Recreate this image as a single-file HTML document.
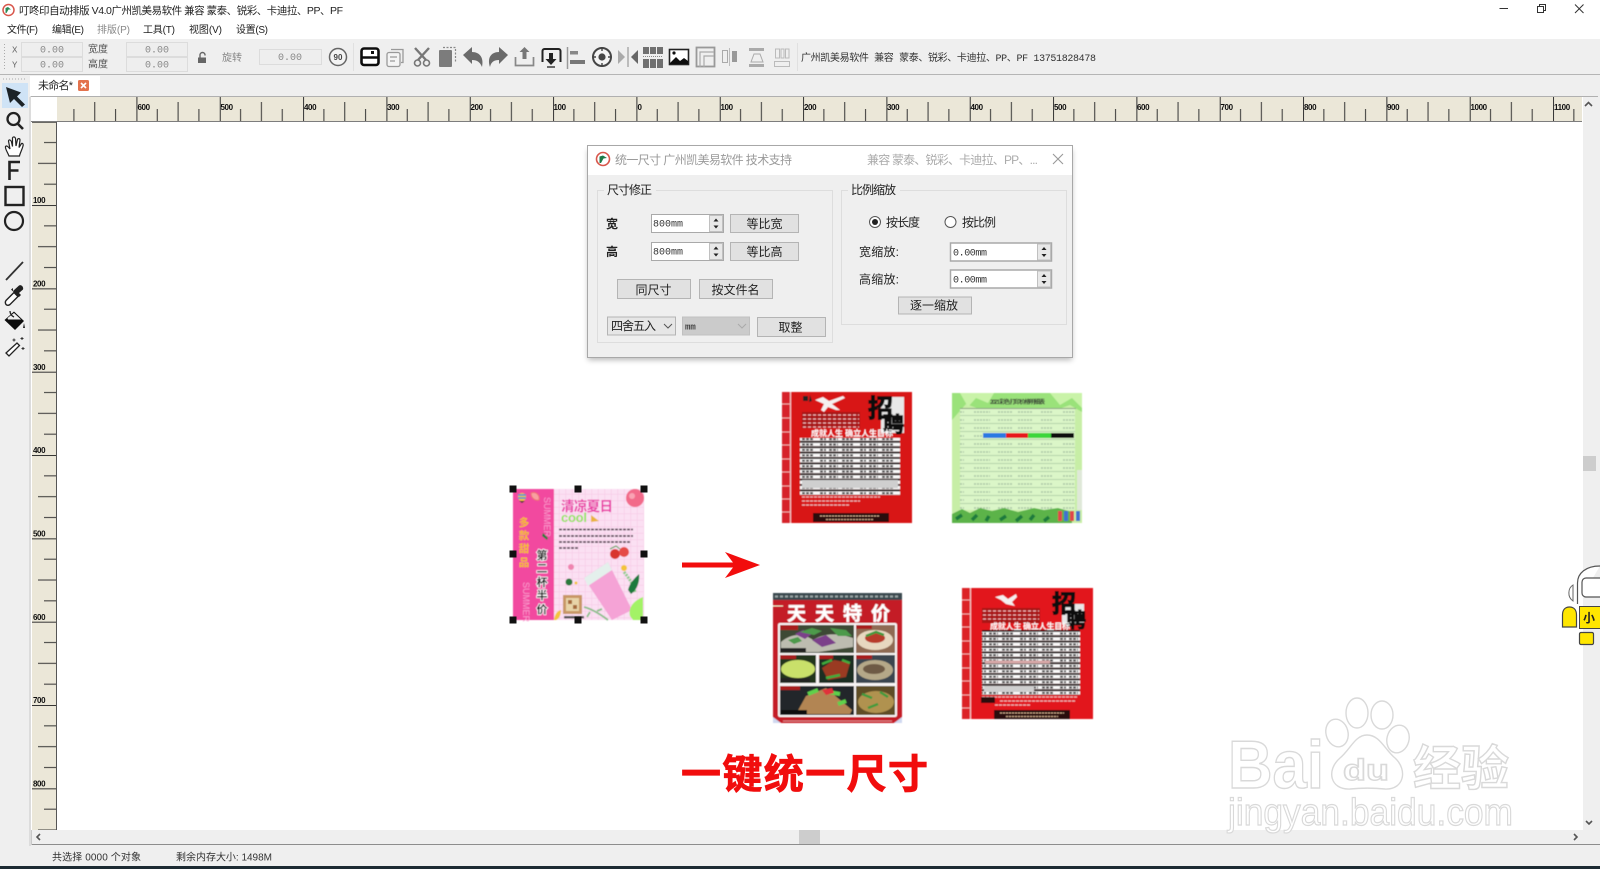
<!DOCTYPE html>
<html lang="zh">
<head>
<meta charset="utf-8">
<title>叮咚印自动排版</title>
<style>
html,body{margin:0;padding:0;background:#fff;width:1600px;height:869px;overflow:hidden}
svg{display:block;position:absolute;left:0;top:0}
text{font-family:"Liberation Sans","Noto Sans CJK SC",sans-serif;fill:#222;font-size:10px}
.m{font-family:"Liberation Mono","Noto Sans CJK SC",monospace}
.d{font-size:12px;fill:#222}
.g{fill:#888}
.rl{font-size:8px;font-weight:bold;fill:#111;letter-spacing:-.4px}
.btn{fill:#e1e1e1;stroke:#b4b4b4;stroke-width:1}
.wm{fill:#fff;stroke:#d9d9d9;stroke-width:1.400}
.v1{font-size:10.500px;font-weight:bold;fill:#f6c028}
.v2{font-size:11px;font-weight:bold;fill:#111;stroke:#fff;stroke-width:1.500;paint-order:stroke}
.zp{font-weight:bold;fill:#0c0c0c;stroke:#0c0c0c;stroke-width:1}
</style>
</head>
<body>
<svg width="1600" height="869" viewBox="0 0 1600 869" xmlns="http://www.w3.org/2000/svg">
<defs>
<filter id="ui" x="0" y="0" width="100%" height="100%"><feGaussianBlur stdDeviation="0.3"/></filter>
<filter id="pb" x="-5%" y="-5%" width="110%" height="110%"><feGaussianBlur stdDeviation="0.55"/></filter>
<filter id="sh" x="-5%" y="-5%" width="110%" height="115%"><feGaussianBlur stdDeviation="3"/></filter>
<pattern id="rt" x="636.4" y="97" width="83.33" height="24" patternUnits="userSpaceOnUse">
<path d="M.5 0V24M20.83 12V24M41.67 5V24M62.5 12V24" stroke="#333" stroke-width="1" fill="none"/>
</pattern>
<pattern id="rl" x="32" y="121.7" width="24" height="83.33" patternUnits="userSpaceOnUse">
<path d="M0 .5H24M12 20.83H24M6 41.67H24M12 62.5H24" stroke="#333" stroke-width="1" fill="none"/>
</pattern>
<pattern id="pg" x="0" y="0" width="6.5" height="6.5" patternUnits="userSpaceOnUse">
<path d="M0 0H6.5M0 0V6.5" stroke="#f6c5e4" stroke-width="1" fill="none"/>
</pattern>
<pattern id="tbl" x="0" y="0" width="40" height="5.4" patternUnits="userSpaceOnUse">
<rect width="40" height="3.4" fill="#fafafa"/>
<rect y="3.4" width="40" height="2" fill="#1f0f0f"/>
<path d="M2 1.700H14M20 1.700H26M29 1.700H38" stroke="#222" stroke-width="1.800" stroke-dasharray="3 1"/>
</pattern>
<pattern id="grn" x="0" y="0" width="115" height="8" patternUnits="userSpaceOnUse">
<rect width="115" height="8" fill="#dbf6c8"/>
<path d="M0 7.500H115" stroke="#a5c7a0" stroke-width=".7"/>
<path d="M6 4H18M28 4H44M54 4H70M78 4H92M98 4H112" stroke="#a8c2a4" stroke-width="1.400" stroke-dasharray="2 1"/>
</pattern>
</defs>

<g filter="url(#ui)">
<!-- title + menu -->
<rect width="1600" height="39" fill="#fff"/>
<circle cx="8.500" cy="10" r="5.500" fill="#fff" stroke="#d8564c" stroke-width="1.500"/>
<path d="M5.500 13V8L8 7 11 9.500 8.500 9.500 6.500 13Z" fill="#2a8a55"/>
<text x="19" y="14" textLength="324" style="font-size:10.500px">叮咚印自动排版 V4.0广州凯美易软件 兼容 蒙泰、锐彩、卡迪拉、PP、PF</text>
<text x="7" y="33" textLength="31">文件(F)</text>
<text x="52" y="33" textLength="32">编辑(E)</text>
<text x="97" y="33" textLength="33" class="g">排版(P)</text>
<text x="143" y="33" textLength="32">工具(T)</text>
<text x="189" y="33" textLength="33">视图(V)</text>
<text x="236" y="33" textLength="32">设置(S)</text>
<path d="M1499.500 8.500H1508" stroke="#333" fill="none"/>
<path d="M1537.500 6.500h6v6h-6zM1539.500 6.500v-2h6v6h-2" stroke="#333" fill="none"/>
<path d="M1575 4.500l8.500 8.500M1583.500 4.500L1575 13" stroke="#333" fill="none"/>

<!-- window background -->
<rect y="39" width="1600" height="830" fill="#efefef"/>
<rect y="74" width="1600" height="1" fill="#b5b5b5"/>
<rect x="0" y="866" width="1600" height="3" fill="#1b2a33"/>

<!-- toolbar -->
<path d="M4.500 44V70" stroke="#aaa" stroke-dasharray="1 2" fill="none"/>
<text x="12" y="52.500" class="m" style="font-size:9px;fill:#666">X</text>
<text x="12" y="67.500" class="m" style="font-size:9px;fill:#666">Y</text>
<g fill="#eeeeee" stroke="#dcdcdc">
<rect x="21.500" y="42.500" width="61" height="14"/>
<rect x="21.500" y="57.500" width="61" height="14"/>
<rect x="126.500" y="42.500" width="61" height="14"/>
<rect x="126.500" y="57.500" width="61" height="14"/>
<rect x="259.500" y="49.500" width="62" height="15"/>
</g>
<text x="52" y="52.500" class="m g" text-anchor="middle">0.00</text>
<text x="52" y="67.500" class="m g" text-anchor="middle">0.00</text>
<text x="157" y="52.500" class="m g" text-anchor="middle">0.00</text>
<text x="157" y="67.500" class="m g" text-anchor="middle">0.00</text>
<text x="290" y="60" class="m g" text-anchor="middle">0.00</text>
<text x="88" y="52.500" style="fill:#555">宽度</text>
<text x="88" y="67.500" style="fill:#555">高度</text>
<text x="222" y="61" class="g">旋转</text>
<path d="M198 57.500h8v5.500h-8z" fill="#666"/>
<path d="M200 57.500v-2.500a2.500 2.500 0 0 1 5 0v.5" stroke="#666" stroke-width="1.400" fill="none"/>
<circle cx="338" cy="57" r="8.500" fill="#f4f4f4" stroke="#666" stroke-width="1.500"/>
<text x="338" y="60" text-anchor="middle" style="font-size:8px;font-weight:bold;fill:#444">90</text>
<path d="M353.500 43V71M797.500 43V71" stroke="#e0e0e0" fill="none"/>

<!-- save -->
<rect x="361.500" y="48.500" width="17" height="16.500" rx="2.500" fill="#fff" stroke="#111" stroke-width="2.600"/>
<path d="M361 57.500H379" stroke="#111" stroke-width="2.400"/>
<rect x="371" y="51" width="3" height="3" fill="#111"/>
<!-- copy -->
<path d="M391 49.500h12v13h-2" fill="none" stroke="#999" stroke-width="1.300"/>
<rect x="387" y="52.500" width="13" height="14" rx="2" fill="#f4f4f4" stroke="#999" stroke-width="1.300"/>
<path d="M390 57h7M390 61h5" stroke="#999" stroke-width="1.200"/>
<!-- scissors -->
<path d="M415 48L426 60M429 48L418 60" stroke="#777" stroke-width="2.400" fill="none"/>
<circle cx="417.500" cy="63" r="3" fill="none" stroke="#777" stroke-width="1.600"/>
<circle cx="426.500" cy="63" r="3" fill="none" stroke="#777" stroke-width="1.600"/>
<!-- paste -->
<rect x="439" y="50" width="13" height="17" rx="1" fill="#7c7c7c"/>
<path d="M443 47.500h12.500v15" fill="none" stroke="#888" stroke-width="1.200" stroke-dasharray="2 1.500"/>
<!-- undo redo -->
<path d="M463 55L472 47V52C480 52 484 58 482 67C480 62 477 60 472 60V64Z" fill="#6a6a6a"/>
<path d="M508 55L499 47V52C491 52 487 58 490 67C491 62 494 60 499 60V64Z" fill="#6a6a6a"/>
<!-- upload -->
<path d="M515.500 57v8.500h18V57" fill="none" stroke="#888" stroke-width="1.700"/>
<path d="M524.500 47l5 5h-3v7h-4v-7h-3z" fill="#777"/>
<!-- download -->
<path d="M542.500 62V51a2 2 0 0 1 2-2h14a2 2 0 0 1 2 2v11" fill="none" stroke="#222" stroke-width="2"/>
<path d="M549 53h4v6h3.500l-5.500 6-5.500-6H549z" fill="#222"/>
<path d="M547 67h8" stroke="#222" stroke-width="1.300"/>
<!-- align -->
<path d="M567.500 47V69" stroke="#999" stroke-width="1.500"/>
<rect x="570" y="51" width="8" height="3.500" fill="#888"/>
<rect x="570" y="60" width="15" height="4" fill="#777"/>
<!-- target -->
<circle cx="602" cy="57" r="9" fill="#f4f4f4" stroke="#444" stroke-width="2"/>
<circle cx="602" cy="57" r="3.600" fill="#444"/>
<path d="M602 47v4M602 63v4M592 57h4M608 57h4" stroke="#444" stroke-width="1.400"/>
<!-- mirror -->
<path d="M618 50v14l7-7z" fill="#aaa"/>
<path d="M628 47V67" stroke="#888"/>
<path d="M638 50v14l-7-7z" fill="#666"/>
<!-- grid -->
<g fill="#707070">
<rect x="643" y="47" width="6" height="7"/><rect x="650" y="47" width="6" height="7"/><rect x="657" y="47" width="6" height="7"/>
<rect x="643" y="59" width="6" height="9"/><rect x="650" y="59" width="6" height="9"/><rect x="657" y="59" width="6" height="9"/>
</g>
<path d="M643 56.500H663" stroke="#888" stroke-dasharray="1 1"/>
<!-- image -->
<rect x="669.500" y="49.500" width="19" height="15" fill="#fff" stroke="#222" stroke-width="1.600"/>
<path d="M670 63l6-6 4 4 4-3 4 3v3h-18z" fill="#111"/>
<circle cx="674" cy="53" r="1.600" fill="#111"/>
<!-- layout -->
<rect x="696.500" y="47.500" width="18" height="19" fill="none" stroke="#999" stroke-width="1.800"/>
<path d="M700 67V52h14M704 67V56h10" fill="none" stroke="#aaa" stroke-width="1.200"/>
<!-- gray mirror -->
<rect x="722.500" y="50.500" width="5" height="12" fill="none" stroke="#aaa"/>
<path d="M729.500 48v18" stroke="#bbb"/>
<path d="M732 51h5v11h-5z" fill="#999"/>
<!-- vertical -->
<path d="M749 48h15v3h-15zM749 64h15v3h-15z" fill="#aaa"/>
<path d="M751 62l3-8h6l3 8z" fill="none" stroke="#aaa"/>
<!-- distribute -->
<rect x="774.500" y="61.500" width="15" height="5" fill="none" stroke="#bbb"/>
<path d="M775.500 49h4v9h-4zM781 49h3v9h-3zM785.500 49h3.500v9h-3.500z" fill="none" stroke="#bbb"/>
<text x="801" y="61" class="m" textLength="295" style="fill:#333">广州凯美易软件 兼容 蒙泰、锐彩、卡迪拉、PP、PF  13751828478</text>

<!-- tab row -->
<rect x="30" y="76" width="70" height="21" fill="#fff"/>
<text x="38" y="89" textLength="35" style="font-size:11px">未命名*</text>
<rect x="78" y="80" width="11" height="11" rx="1.500" fill="#e3734e"/>
<path d="M81 83l5 5M86 83l-5 5" stroke="#fff" stroke-width="1.600"/>

<!-- left toolbar -->
<rect x="29" y="97" width="2" height="749" fill="#dcdcdc"/>
<path d="M3 79H26" stroke="#aaa" stroke-dasharray="1 2"/>
<rect x="2" y="83" width="26" height="25" fill="#cfe3f6"/>
<path d="M6 87L21 92.500 17 96.500 25 104.500 22 107 14 99 10 103Z" fill="#1e2226"/>
<circle cx="13.500" cy="119" r="6" fill="none" stroke="#222" stroke-width="2.300"/>
<path d="M18 124l5 5" stroke="#222" stroke-width="2.600"/>
<path d="M9 156C7 151 5 149 5.500 146.500C6.500 145 8.500 147 10 149L8.500 141C9 139 11 140 11.500 142L12.500 146.500L12.500 138C13 136.500 15 136.500 15.500 138.500L16 146L17.500 139.500C18 138 20 138.500 20 140L19 147.500L21.500 143.500C23 143 23.500 144.500 23 146C22 150 20 153 19.500 156Z" fill="#fff" stroke="#222" stroke-width="1.200"/>
<path d="M9.500 180V162H20M9.500 170.500H18.500" fill="none" stroke="#222" stroke-width="2.600"/>
<rect x="5.500" y="187" width="18" height="18" fill="none" stroke="#222" stroke-width="2.400"/>
<circle cx="14" cy="221" r="9" fill="none" stroke="#222" stroke-width="2.200"/>
<path d="M6 280L23 262" stroke="#333" stroke-width="1.800"/>
<path d="M6 304.500C5 303 5 302 6 300.500L14 292.500L18 296.500L10 304.500C8.500 305.500 7 305.500 6 304.500Z" fill="#fff" stroke="#222" stroke-width="1.400"/>
<path d="M13 291L19 285.500C21 284 24 287 23 289.500L19 293L21 295L19 297L11 289.500L13 288Z" fill="#222"/>
<path d="M4.500 320L14 311.500L24 321L15 330Z" fill="#111"/>
<path d="M7.500 318L14 313L21 319.500H8Z" fill="#efefef"/>
<path d="M10 311C10 314 12 316 14 317" stroke="#222" stroke-width="1.300" fill="none"/>
<path d="M24 323l-1 5 2 0z" fill="#222"/>
<path d="M6 353L17 343L19.500 345.500L9 356Z" fill="#fff" stroke="#222" stroke-width="1.300"/>
<path d="M14 338.500v3M12.500 340h3M22 337v3M20.500 338.500h3M23 347v3M21.500 348.500h3" stroke="#333"/>

<!-- frame -->
<rect x="31" y="96" width="1552" height="735" fill="#fff"/>
<path d="M30.500 96.500H1598" stroke="#b0b0b0" fill="none"/>
<rect x="57" y="97" width="1525" height="24" fill="#ebe7d8"/>
<rect x="57" y="97" width="1525" height="24" fill="url(#rt)"/>
<rect x="31" y="121" width="1551" height="1" fill="#7d7d7d"/>
<rect x="32" y="122" width="24" height="708" fill="#ebe7d8"/>
<rect x="32" y="122" width="24" height="708" fill="url(#rl)"/>
<rect x="56" y="122" width="1" height="708" fill="#555"/>
<!-- top ruler labels -->
<text x="137.500" y="110" class="rl">600</text><text x="220.500" y="110" class="rl">500</text><text x="304" y="110" class="rl">400</text><text x="387" y="110" class="rl">300</text><text x="470.500" y="110" class="rl">200</text><text x="553.500" y="110" class="rl">100</text><text x="637.500" y="110" class="rl">0</text><text x="720.500" y="110" class="rl">100</text><text x="804" y="110" class="rl">200</text><text x="887" y="110" class="rl">300</text><text x="970.500" y="110" class="rl">400</text><text x="1054" y="110" class="rl">500</text><text x="1137" y="110" class="rl">600</text><text x="1220.500" y="110" class="rl">700</text><text x="1304" y="110" class="rl">800</text><text x="1387" y="110" class="rl">900</text><text x="1470.500" y="110" class="rl">1000</text><text x="1554" y="110" class="rl">1100</text>
<!-- left ruler labels -->
<text x="33" y="203" class="rl">100</text><text x="33" y="286.500" class="rl">200</text><text x="33" y="370" class="rl">300</text><text x="33" y="453" class="rl">400</text><text x="33" y="536.500" class="rl">500</text><text x="33" y="620" class="rl">600</text><text x="33" y="703" class="rl">700</text><text x="33" y="786.500" class="rl">800</text>

<!-- scrollbars -->
<rect x="31" y="830" width="1569" height="14" fill="#efefef"/>
<rect x="1583" y="97" width="15" height="747" fill="#efefef"/>
<rect x="799" y="830" width="21" height="14" fill="#cdcdcd"/>
<rect x="1583" y="456" width="13" height="15" fill="#cdcdcd"/>
<path d="M31 844.500H1600" stroke="#8d8d8d" fill="none"/>
<path d="M31.500 830V845" stroke="#c8c8c8" fill="none"/>
<path d="M1585 106l3.500-3.500 3.500 3.500M1586 821l3 3 3-3M1574 834l3 3-3 3M40 834l-3 3 3 3" stroke="#555" stroke-width="1.600" fill="none"/>

<!-- status -->
<text x="52" y="860.500" textLength="89" style="fill:#333">共选择 0000 个对象</text>
<text x="176" y="860.500" textLength="96" style="fill:#333">剩余内存大小: 1498M</text>

<!-- side mascot -->
<path d="M1577.500 604V583C1577.500 573 1586 566 1600 566" fill="#fff" stroke="#555" stroke-width="1.200"/>
<rect x="1582" y="578" width="24" height="19" rx="4" fill="#fff" stroke="#555" stroke-width="1.200"/>
<path d="M1573 585C1568 588 1567 597 1573 601Z" fill="#fff" stroke="#666"/>
<path d="M1562.500 627V615C1562.500 610 1565 607 1569.500 607C1574 607 1576.500 610 1576.500 615V627Z" fill="#ffe600" stroke="#444" stroke-width="1.200"/>
<rect x="1579.500" y="606.500" width="24" height="22" fill="#ffe600" stroke="#444" stroke-width="1"/>
<text x="1583" y="622" style="font-size:12px;fill:#222;font-weight:bold">小</text>
<rect x="1579.500" y="632.500" width="14" height="12" rx="1.500" fill="#ffe600" stroke="#444" stroke-width="1.200"/>

<!-- dialog -->
<rect x="588" y="150" width="484" height="210" fill="#000" opacity=".28" filter="url(#sh)"/>
<rect x="587.500" y="145.500" width="485" height="212" fill="#efefef" stroke="#a8a8a8"/>
<rect x="588" y="146" width="484" height="29" fill="#fff"/>
<circle cx="603" cy="159" r="6.500" fill="#fff" stroke="#d8564c" stroke-width="1.600"/>
<path d="M599.500 163V156.500L603 155.500 607 158 603.500 158.500 601 163Z" fill="#1f7a4a"/>
<text x="615" y="164" textLength="177" style="font-size:12px;fill:#9a9a9a">统一尺寸 广州凯美易软件 技术支持</text>
<text x="867" y="164" textLength="171" style="font-size:12px;fill:#ababab">兼容 蒙泰、锐彩、卡迪拉、PP、...</text>
<path d="M1053 154l10 10M1063 154l-10 10" stroke="#999" stroke-width="1.100" fill="none"/>

<rect x="597.500" y="190.500" width="235" height="152" fill="none" stroke="#dddddd"/>
<rect x="841.500" y="190.500" width="225" height="134" fill="none" stroke="#dddddd"/>
<rect x="604" y="184" width="52" height="12" fill="#efefef"/>
<rect x="848" y="184" width="52" height="12" fill="#efefef"/>
<text x="607" y="194" class="d" textLength="45">尺寸修正</text>
<text x="851" y="194" class="d" textLength="45">比例缩放</text>

<text x="606" y="228" class="d" style="font-weight:bold">宽</text>
<text x="606" y="256" class="d" style="font-weight:bold">高</text>

<!-- spin boxes -->
<g fill="#fff" stroke="#a9a9a9">
<rect x="651.500" y="214.500" width="72" height="18"/>
<rect x="651.500" y="242.500" width="72" height="18"/>
<rect x="950.500" y="243" width="101" height="18" stroke-width="1.500"/>
<rect x="950.500" y="270" width="101" height="18" stroke-width="1.500"/>
</g>
<g fill="#e8e8e8" stroke="#c0c0c0">
<rect x="709.500" y="215.500" width="13" height="16"/>
<rect x="709.500" y="243.500" width="13" height="16"/>
<rect x="1037.500" y="244" width="13" height="16"/>
<rect x="1037.500" y="271" width="13" height="16"/>
</g>
<path d="M716 218.500l2.500 3h-5zM716 228.500l2.500-3h-5zM716 246.500l2.500 3h-5zM716 256.500l2.500-3h-5zM1044 247l2.500 3h-5zM1044 257l2.500-3h-5zM1044 274l2.500 3h-5zM1044 284l2.500-3h-5z" fill="#222"/>
<text x="653" y="226.500" class="m" textLength="30" style="font-size:10px;fill:#333">800mm</text>
<text x="653" y="254.500" class="m" textLength="30" style="font-size:10px;fill:#333">800mm</text>
<text x="953" y="255.500" class="m" textLength="34" style="font-size:10px;fill:#333">0.00mm</text>
<text x="953" y="282.500" class="m" textLength="34" style="font-size:10px;fill:#333">0.00mm</text>

<!-- buttons -->
<rect class="btn" x="730.500" y="214.500" width="68" height="18"/>
<rect class="btn" x="730.500" y="242.500" width="68" height="18"/>
<rect class="btn" x="617.500" y="279.500" width="73" height="19"/>
<rect class="btn" x="699.500" y="279.500" width="73" height="19"/>
<rect class="btn" x="757.500" y="317.500" width="68" height="19"/>
<rect class="btn" x="898.500" y="297" width="73" height="17"/>
<text x="764.500" y="228" class="d" text-anchor="middle">等比宽</text>
<text x="764.500" y="256" class="d" text-anchor="middle">等比高</text>
<text x="653.500" y="294" class="d" text-anchor="middle">同尺寸</text>
<text x="735.500" y="294" class="d" text-anchor="middle">按文件名</text>
<text x="790.500" y="331.500" class="d" text-anchor="middle">取整</text>
<text x="934" y="309.500" class="d" text-anchor="middle">逐一缩放</text>

<!-- selects -->
<rect x="607.500" y="317" width="68" height="18" fill="#e6e6e6" stroke="#b4b4b4"/>
<text x="611" y="330" class="d" textLength="45">四舍五入</text>
<path d="M664 324l4 4 4-4" stroke="#555" fill="none"/>
<rect x="682.500" y="317" width="67" height="18" fill="#cbcbcb" stroke="#c0c0c0"/>
<text x="685" y="329.500" class="m" style="font-size:9px;font-weight:bold;fill:#444">mm</text>
<path d="M738 324l4 4 4-4" stroke="#aaa" fill="none"/>

<!-- radios -->
<circle cx="875" cy="222" r="5.500" fill="#fff" stroke="#555"/>
<circle cx="875" cy="222" r="3" fill="#222"/>
<circle cx="950.500" cy="222" r="5.500" fill="#fff" stroke="#555"/>
<text x="886" y="226.500" class="d" textLength="34">按长度</text>
<text x="962" y="226.500" class="d" textLength="34">按比例</text>
<text x="859" y="256" class="d" textLength="40">宽缩放:</text>
<text x="859" y="283.500" class="d" textLength="40">高缩放:</text>
</g>

<!-- pink poster -->
<g filter="url(#pb)">
<rect x="513" y="489" width="131" height="131" fill="#fbe0f3"/>
<rect x="554" y="489" width="90" height="131" fill="url(#pg)"/>
<rect x="513" y="489" width="41" height="131" fill="#f2489f"/>
<circle cx="522" cy="497" r="4" fill="#f2c43a"/><path d="M518 495h8M518 498h8" stroke="#2d8fe0" stroke-width="1.500"/><path d="M519 501h6l-3 2z" fill="#333"/>
<path d="M531 493c6-2 9 3 8 7c-3 1-8-1-8-7z" fill="#f8a0a0" stroke="#f07070"/>
<text x="524" y="526" text-anchor="middle" class="v1">多</text>
<text x="524" y="539" text-anchor="middle" class="v1">款</text>
<text x="524" y="552" text-anchor="middle" class="v1">甜</text>
<text x="524" y="566" text-anchor="middle" class="v1">品</text>
<text x="542" y="559" text-anchor="middle" class="v2">第</text>
<text x="542" y="572" text-anchor="middle" class="v2">二</text>
<text x="542" y="586" text-anchor="middle" class="v2">杯</text>
<text x="542" y="599" text-anchor="middle" class="v2">半</text>
<text x="542" y="613" text-anchor="middle" class="v2">价</text>
<text transform="translate(544 497) rotate(90)" style="font-size:9px;fill:#f99ed0">SUMMER</text>
<text transform="translate(518 582) rotate(90)" style="font-size:0px;fill:#f99ed0"></text>
<text transform="translate(523 582) rotate(90)" style="font-size:9px;fill:#f99ed0">SUMMER</text>
<path d="M543 533l5 5-1 2-5-4z" fill="#2c7a3c"/>
<text x="561" y="511" textLength="52" style="font-size:13.500px;font-weight:bold;fill:#e93ea6">清凉夏日</text>
<text x="561" y="522" textLength="26" style="font-size:13px;font-weight:bold;fill:#93e45e">cool</text>
<path d="M591 515l8 6-8 1z" fill="#eab33c"/>
<circle cx="635" cy="498" r="9" fill="#f26b8a"/><circle cx="632" cy="496" r="3" fill="#f9a3b4"/>
<path d="M559 529.500H633M559 536H633M559 542H631M559 548H578" stroke="#3c2b3a" stroke-width="1.800" stroke-dasharray="3 1" opacity=".85"/>
<circle cx="615" cy="554" r="5" fill="#d8342f"/><circle cx="624" cy="552" r="5" fill="#e54c46"/>
<path d="M610 549l6-3 4 3" stroke="#4aa04a" fill="none"/>
<path d="M584 578L608 562L632 610L612 620Z" fill="#f5a3d6"/>
<path d="M584 578L608 562L612 570L588 586Z" fill="#e4f0ec"/>
<path d="M624 572c5 6 9 12 11 20" stroke="#8ccc8c" stroke-width="3" fill="none" stroke-dasharray="2 1"/>
<path d="M628 590c2-8 7-12 11-16c1 8-2 16-8 20z" fill="#1c7a3c"/>
<path d="M630 616c-2-8 3-15 13-19v23h-10z" fill="#a3f266"/>
<path d="M584 607c8 2 16 7 24 13M590 612l-3 5M597 611l5-2" stroke="#8bc08b" stroke-width="1.800" fill="none"/>
<rect x="563" y="595" width="19" height="19" fill="#c89766"/><rect x="566" y="598" width="13" height="13" fill="#e8d4a8"/><path d="M568 600h4v4h-4zM573 605h4v4h-4z" fill="#a56a3a"/>
<rect x="564" y="616" width="20" height="2.500" fill="#555"/>
<circle cx="571" cy="567" r="3" fill="#ef85b0"/><circle cx="569" cy="582" r="3.500" fill="#2c7a3c"/><circle cx="576" cy="583" r="1.500" fill="#f3c43a"/><circle cx="624" cy="568" r="3" fill="#f3c43a"/>
<path d="M554 620c1-6 3-9 7-10c0 5-2 9-5 10z" fill="#f3c43a"/>
</g>
<g fill="#111">
<rect x="509.500" y="485.500" width="7" height="7"/><rect x="574.500" y="485.500" width="7" height="7"/><rect x="640.500" y="485.500" width="7" height="7"/>
<rect x="509.500" y="550.500" width="7" height="7"/><rect x="640.500" y="550.500" width="7" height="7"/>
<rect x="509.500" y="616.500" width="7" height="7"/><rect x="574.500" y="616.500" width="7" height="7"/><rect x="640.500" y="616.500" width="7" height="7"/>
</g>

<!-- arrow -->
<g filter="url(#ui)">
<path d="M682 562.500H733L725 552L760 565L725 578L733 567.500H682Z" fill="#f20a0a"/>
</g>

<!-- red poster 1 -->
<g filter="url(#pb)">
<rect x="782" y="392" width="130" height="131" fill="#d81519"/>
<rect x="782" y="392" width="8" height="131" fill="#d6232a"/>
<path d="M790.500 392V523" stroke="#f5c8c8" stroke-width="1.200"/>
<path d="M782 404H790M782 418H790M782 432H790M782 445H790M782 459H790M782 472H790M782 486H790M782 499H790M782 512H790" stroke="#f0a8a8"/>
<path d="M815 400L823 397L829 401L843 396L845 398L832 404L840 410L836 410L828 407L824 412L821 410L824 404Z" fill="#f5f0f0"/>
<path d="M803 396h5v5h-5zM810 395l2 6-3 1z" fill="#222"/>
<rect x="802" y="412" width="58" height="16" fill="#a81218"/>
<path d="M803 415H859M803 419H859M803 423H859M803 427H859" stroke="#f2b8b8" stroke-dasharray="3 2" stroke-width="1.300"/>
<rect x="881" y="397" width="23" height="36" fill="#e8e8e8"/>
<text x="868" y="417" class="zp" style="font-size:25px">招</text>
<text x="883" y="432" class="zp" style="font-size:21px">聘</text>
<text x="811" y="436" textLength="82" style="font-size:8px;font-weight:bold;fill:#fff">成就人生 确立人生目标</text>
<rect x="800" y="438" width="100" height="57" fill="url(#tbl)"/>
<rect x="802" y="480" width="96" height="8" fill="#cfcfcf"/>
<path d="M802 497H880M802 501H860M802 505H850" stroke="#e9b8b8" stroke-width="1.300" stroke-dasharray="3 1"/>
<rect x="813" y="513" width="76" height="9" fill="#2b0b0b"/>
<path d="M820 516H880M826 519.500H874" stroke="#d8b090" stroke-dasharray="2 1"/>
</g>

<!-- green poster -->
<g filter="url(#pb)">
<rect x="952" y="393" width="130" height="130" fill="#c7eea6"/>
<path d="M952 393H1082V412L1070 405L1056 410H982L966 404L952 420Z" fill="#9ae27a"/>
<path d="M960 393l8 14 8-9 12 5 6-10zM1050 393l10 12 12-7 10 10v-15z" fill="#c9f3a8"/>
<text x="990" y="404" textLength="55" style="font-size:6px;font-weight:bold;fill:#333">2021 彩色 打印价格明细表</text>
<path d="M960 408.500H1076" stroke="#8ba284"/>
<rect x="960" y="409" width="115" height="101" fill="url(#grn)"/>
<rect x="983" y="433" width="23" height="5" fill="#2a79e2"/>
<rect x="1006" y="433" width="22" height="5" fill="#e8161c"/>
<rect x="1028" y="433" width="23" height="5" fill="#3bd63b"/>
<rect x="1051" y="433" width="23" height="5" fill="#0b0b0b"/>
<path d="M952 514l10-5 8 4 10-5 12 3 12-3 14 4 16-4 10 2 14-2 14 4v11H952z" fill="#5cb34a"/>
<path d="M956 519l6-4M972 520l5-5M986 521l3-5M1000 520l6-4M1016 521l6-5M1030 520l4-5M1044 521l5-4" stroke="#1f7a3c" stroke-width="3.500"/>
<rect x="1058" y="511" width="4" height="10" fill="#e0444c"/><rect x="1064" y="511" width="4" height="10" fill="#3f6fd0"/><rect x="1070" y="511" width="4" height="10" fill="#e0444c"/><rect x="1076" y="511" width="4" height="10" fill="#3f6fd0"/>
<rect x="1077" y="470" width="5" height="40" fill="#dfe8d8"/>
</g>

<!-- food poster -->
<g filter="url(#pb)">
<rect x="773" y="593" width="129" height="130" fill="#c41c26"/>
<rect x="773" y="593" width="129" height="7" fill="#3a4a50"/>
<path d="M775 596.500H900" stroke="#9aa5a5" stroke-width="2" stroke-dasharray="3 2"/>
<text x="787" y="620" textLength="103" style="font-size:19px;font-weight:bold;fill:#fff;stroke:#fff;stroke-width:.5">天天特价</text>
<path d="M773 606h10" stroke="#eec" stroke-width="1"/>
<rect x="778" y="623" width="119" height="94" rx="2" fill="#f8f4f4"/>
<rect x="780" y="625" width="74" height="28" fill="#3e4a34"/>
<path d="M781 642c12-10 24-8 32-2c10-6 22-8 40-2v9l-34 5h-38z" fill="#bdbcb0"/>
<path d="M795 634l8-4 10 3-8 6zM812 640l14-5 10 8-14 4z" fill="#7b3f8a"/>
<path d="M800 632l12-4 10 3-8 4zM830 628l16 2 6 6-14 0zM788 640l10-3 4 4-8 3z" fill="#4e9a4c"/>
<rect x="780" y="625" width="18" height="5" fill="#a81c1c"/>
<rect x="780" y="648" width="26" height="4" fill="#222"/>
<rect x="856" y="625" width="39" height="28" fill="#8f6b52"/>
<ellipse cx="875" cy="640" rx="18" ry="10" fill="#e7d8c0"/><ellipse cx="875" cy="638" rx="10" ry="5" fill="#b83a2a"/><path d="M866 636l10-4 8 3" stroke="#3f9a3c" stroke-width="2.500" fill="none"/>
<rect x="856" y="625" width="16" height="4" fill="#a81c1c"/>
<rect x="780" y="655" width="36" height="28" fill="#20361f"/>
<ellipse cx="798" cy="669" rx="17" ry="9" fill="#c9e06a"/>
<rect x="780" y="655" width="16" height="4" fill="#a81c1c"/><rect x="780" y="678" width="30" height="4" fill="#222"/>
<rect x="819" y="655" width="35" height="28" fill="#1e2e20"/>
<path d="M822 668l12-8 16 3-4 14-18 3z" fill="#9a3a22"/><path d="M822 664l10-4M842 660l8 3M826 678l14-3" stroke="#3faa3c" stroke-width="2.500"/>
<rect x="819" y="655" width="14" height="4" fill="#a81c1c"/>
<rect x="856" y="655" width="39" height="28" fill="#3a4450"/>
<ellipse cx="875" cy="670" rx="18" ry="10" fill="#b5a888"/><ellipse cx="874" cy="669" rx="11" ry="5" fill="#6e5a44"/>
<rect x="856" y="655" width="16" height="4" fill="#a81c1c"/>
<rect x="780" y="686" width="74" height="29" fill="#23262c"/>
<path d="M796 714l10-18 20-8 26 22-2 4z" fill="#b28552"/>
<path d="M808 694l10-4M828 692l12 2M838 704l8-3" stroke="#5fd04c" stroke-width="4"/>
<path d="M822 690l10-2 2 5-8 2z" fill="#e0303a"/>
<rect x="780" y="686" width="20" height="4" fill="#a81c1c"/><rect x="781" y="710" width="26" height="4" fill="#111"/>
<rect x="856" y="686" width="39" height="29" fill="#5f4e28"/>
<ellipse cx="876" cy="702" rx="18" ry="11" fill="#b09250"/><path d="M862 694l10 4M880 692l8 5M868 708l10-4" stroke="#3f9a3c" stroke-width="2.500"/>
<path d="M773 717l8 6h-8zM902 717l-8 6h8z" fill="#cfd8f0"/>
<path d="M783 721H892" stroke="#e8b0b0" stroke-width=".8"/>
</g>

<!-- red poster 2 -->
<g filter="url(#pb)">
<rect x="962" y="588" width="131" height="131" fill="#e2161c"/>
<rect x="962" y="588" width="8" height="131" fill="#dc2228"/>
<path d="M970.500 588V719" stroke="#f5c8c8" stroke-width="1.200"/>
<path d="M962 600H970M962 614H970M962 627H970M962 641H970M962 654H970M962 668H970M962 681H970M962 695H970M962 708H970" stroke="#f0a8a8"/>
<path d="M995 597L1003 595L1008 599L1016 594L1017 597L1012 602L1015 606L1006 604L1001 600Z" fill="#f5f0f0"/>
<rect x="982" y="608" width="58" height="15" fill="#a81218"/>
<path d="M983 611H1039M983 615H1039M983 619H1039" stroke="#f2b8b8" stroke-dasharray="3 2" stroke-width="1.300"/>
<rect x="1062" y="604" width="22" height="20" fill="#e8e8e8"/>
<text x="1052" y="612" class="zp" style="font-size:24px">招</text>
<text x="1066" y="627" class="zp" style="font-size:20px">聘</text>
<text x="990" y="629" textLength="80" style="font-size:8px;font-weight:bold;fill:#fff">成就人生 确立人生目标</text>
<rect x="982" y="630" width="98" height="65" fill="url(#tbl)"/>
<path d="M985 662H1050" stroke="#d8a8a8" stroke-width="3"/>
<rect x="984" y="686" width="50" height="6" fill="#cfcfcf"/>
<path d="M982 697H1078M1000 701H1076M995 705H1030" stroke="#eab8b8" stroke-width="1.300" stroke-dasharray="3 1"/>
<rect x="981" y="697" width="14" height="6" fill="#2b0b0b"/>
<rect x="994" y="710" width="76" height="9" fill="#2b0b0b"/>
<path d="M1000 713H1064M1006 716.500H1058" stroke="#d8b090" stroke-dasharray="2 1"/>
</g>

<!-- headline -->
<g filter="url(#ui)">
<text x="681" y="788" textLength="247" style="font-size:40px;font-weight:bold;fill:#f10d0d;stroke:#f10d0d;stroke-width:.8">一键统一尺寸</text>
</g>

<!-- baidu watermark -->
<g>
<text x="1228" y="788" textLength="96" lengthAdjust="spacingAndGlyphs" class="wm" style="font-size:68px;font-weight:bold">Bai</text>
<ellipse cx="1337" cy="733" rx="11" ry="14" class="wm" transform="rotate(-15 1337 733)"/>
<ellipse cx="1357" cy="713" rx="11" ry="15" class="wm"/>
<ellipse cx="1382" cy="715" rx="11" ry="14" class="wm"/>
<ellipse cx="1398" cy="739" rx="11" ry="14" class="wm" transform="rotate(15 1398 739)"/>
<path d="M1367 735C1380 735 1385 750 1395 758C1408 770 1404 790 1385 789C1375 788 1360 788 1350 789C1330 790 1326 770 1340 758C1350 750 1355 735 1367 735Z" class="wm"/>
<text x="1343" y="780" textLength="46" lengthAdjust="spacingAndGlyphs" class="wm" style="font-size:30px;font-weight:bold">du</text>
<text x="1413" y="785" textLength="96" class="wm" style="font-size:48px;font-weight:bold">经验</text>
<text x="1228" y="825" textLength="285" lengthAdjust="spacingAndGlyphs" class="wm" style="font-size:38px;stroke-width:1.200">jingyan.baidu.com</text>
</g>
</svg>
</body>
</html>
